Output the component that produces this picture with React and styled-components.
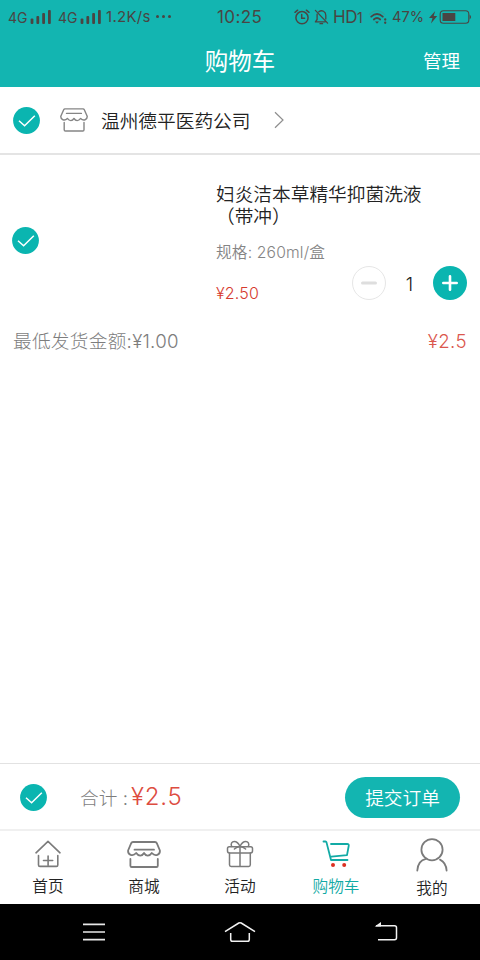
import React, { useState } from "react";
import styled, { createGlobalStyle } from "styled-components";

const tabs = [
	{ key: "home", label: "首页" },
	{ key: "mall", label: "商城" },
	{ key: "gift", label: "活动" },
	{ key: "cart", label: "购物车" },
	{ key: "mine", label: "我的" },
];

const Signal = () => (
	<svg width="22" height="16" viewBox="0 0 22 16" fill="#4a4543">
		<rect x="0.6" y="9.5" width="2.8" height="5.5" rx="1" />
		<rect x="6.4" y="7" width="2.8" height="8" rx="1" />
		<rect x="12.2" y="4" width="2.8" height="11" rx="1" />
		<rect x="18" y="1" width="2.8" height="14" rx="1" />
	</svg>
);

const Alarm = () => (
	<svg width="16" height="16" viewBox="0 0 16 16" fill="none" stroke="#4a4543" strokeWidth="1.5" strokeLinecap="round">
		<circle cx="8" cy="8.7" r="6.1" />
		<path d="M7.7 5.6V9.2H10.6M1 3.3L3.6 1.2M15 3.3L12.4 1.2" />
	</svg>
);

const BellOff = () => (
	<svg width="15" height="16" viewBox="0 0 15 16" fill="none" stroke="#4a4543" strokeWidth="1.3" strokeLinecap="round" strokeLinejoin="round">
		<path d="M4.8 2.8C8 .4 11.8 2.7 11.8 6.3V10M3.1 5.2V10.5L1.4 12.9H11M6 14.7H8.6M1.4 1.4L13.6 14.1" />
	</svg>
);

const Wifi = () => (
	<svg width="20" height="16" viewBox="0 0 20 16" fill="none" stroke="#4a4543" strokeLinecap="round">
		<path d="M1.5 5.2Q9 -2 16.5 5.2" stroke="#2f9f9a" strokeWidth="1.2" />
		<path d="M3.2 7.7Q9 2.4 14.8 7.7M5.8 10.5Q9 7.6 12.2 10.5" strokeWidth="1.8" />
		<path d="M7.1 12.5H10.9L9 14.7Z" fill="#4a4543" stroke="none" />
		<path d="M17.2 10.3V10.5M17.2 13.6V13.8" strokeWidth="2.3" />
	</svg>
);

const Battery = () => (
	<svg width="44" height="16" viewBox="0 0 44 16">
		<path d="M7.2 2L1 9H4.5L3 14.5L9.2 7H5.7Z" fill="#4a4543" />
		<rect x="12.2" y="1.7" width="28.6" height="12.6" rx="3.3" fill="none" stroke="#4a4543" strokeWidth="1.1" />
		<path d="M14.5 4H27.3V12H14.5Z" fill="#4a4543" />
		<path d="M41.6 5.5Q44.5 8 41.6 10.5Z" fill="#4a4543" />
	</svg>
);

const Check = () => (
	<svg width="27" height="27" viewBox="0 0 27 27">
		<circle cx="13.5" cy="13.5" r="13.4" fill="#0ab5b0" />
		<path d="M6 13.7L11.6 18.8L21.8 8.8" fill="none" stroke="#fff" strokeWidth="1.5" />
	</svg>
);

const Shop = () => (
	<svg width="34" height="27" viewBox="0 0 34 27" fill="none" stroke="#7b7b7b" strokeWidth="1.8" strokeLinejoin="round" strokeLinecap="round">
		<path d="M6 1H28Q29.3 1 29.8 2.2L32.9 9.5C33.3 13.5 28.4 16.2 24.8 12C22.6 15.4 18.8 15.4 17 12C15.2 15.4 11.4 15.4 9.2 12C5.6 16.2 .7 13.5 1.1 9.5L4.2 2.2Q4.7 1 6 1Z" />
		<path d="M7.5 8.7H27M3.4 18V24.7Q3.4 26 4.7 26H29.5Q30.8 26 30.8 24.7V18" />
	</svg>
);

const ShopSmall = () => (
	<svg width="28" height="24" viewBox="0 0 28 24" fill="none" stroke="#858585" strokeWidth="1.4" strokeLinejoin="round" strokeLinecap="round">
		<path d="M5 .9H23Q23.9 .9 24.3 1.8L27.2 8.3C27.4 11.6 23.6 13.5 20.6 10.4C18.6 13.3 15.6 13.3 14 10.4C12.4 13.3 9.4 13.3 7.4 10.4C4.4 13.5 .6 11.6 .8 8.3L3.7 1.8Q4.1 .9 5 .9Z" />
		<path d="M6.5 5.4H21.4M4.2 14.5V21.8Q4.2 23 5.4 23H22.8Q24 23 24 21.8V14.5" />
	</svg>
);

const Arrow = () => (
	<svg width="10" height="18" viewBox="0 0 10 18" fill="none" stroke="#8e8e8e" strokeWidth="1.2">
		<path d="M1 1.3L9 9L1 16.7" />
	</svg>
);

const TabIcon = ({ name }) => {
	if (name === "mall") return <Shop />;
	if (name === "home") {
		return (
			<svg width="26" height="28" viewBox="0 0 26 28" fill="none" stroke="#7b7b7b" strokeWidth="1.6" strokeLinecap="round" strokeLinejoin="round">
				<path d="M1 12.8L13 1.3L25 12.8M3.5 15.6V25Q3.5 26.4 4.9 26.4H21.4Q22.8 26.4 22.8 25V15.6M8.5 20.5H17.7M13.1 16V25" />
			</svg>
		);
	}
	if (name === "gift") {
		return (
			<svg width="28" height="28" viewBox="0 0 28 28" fill="none" stroke="#7b7b7b" strokeWidth="1.5" strokeLinecap="round" strokeLinejoin="round">
				<rect x="1.5" y="6.7" width="25" height="6.2" rx="1.8" />
				<path d="M3.5 12.9V24.8Q3.5 26.4 5.1 26.4H22.7Q24.3 26.4 24.3 24.8V12.9M14 6.7V26.4M5.6 6.4C4.4 3.5 6 1.5 8.2 1.5C11 1.5 12.8 3.8 14 6.5C15.2 3.8 17 1.5 19.8 1.5C22 1.5 23.6 3.5 22.4 6.4M14 6.5Q10.8 6.8 8.4 9M14 6.5Q17.2 6.8 19.6 9" />
			</svg>
		);
	}
	if (name === "cart") {
		return (
			<svg width="28" height="28" viewBox="0 0 28 28" fill="none" stroke="#12aaa5" strokeWidth="1.8" strokeLinecap="round" strokeLinejoin="round">
				<path d="M1.5 1.5H3.5Q4.2 1.5 4.5 2.4L9 20H25.5M9 4H25.2Q27.2 4 26.7 6L25 15.2L9.3 16.6" />
				<circle cx="11" cy="25" r="2" fill="#dc3022" stroke="none" />
				<circle cx="22.2" cy="25" r="2" fill="#dc3022" stroke="none" />
			</svg>
		);
	}
	return (
		<svg width="32" height="34" viewBox="0 0 32 34" fill="none" stroke="#7b7b7b" strokeWidth="1.8" strokeLinecap="round">
			<circle cx="16" cy="11.7" r="10.6" />
			<path d="M1.3 32.5C1.7 26 5 21.8 10 20.8M24 21.6C28 23.6 30.3 27.5 30.6 32.5" />
		</svg>
	);
};

const App = () => {
	const [count, setCount] = useState(1);

	return (
		<Page>
			<GlobalStyle />
			<StatusBar>
				<Network>4G</Network>
				<Signal />
				<Network $left={5}>4G</Network>
				<Signal />
				<Speed>1.2K/s</Speed>
				<Dots>
					<i />
					<i />
					<i />
				</Dots>
				<Clock>10:25</Clock>
				<StatusRight>
					<Alarm />
					<BellOff />
					<Hd>
						HD<small>1</small>
					</Hd>
					<Wifi />
					<Percent>47%</Percent>
					<Battery />
				</StatusRight>
			</StatusBar>
			<TitleBar>
				<span />
				<Title>购物车</Title>
				<Manage>管理</Manage>
			</TitleBar>

			<ShopRow>
				<Check />
				<ShopIcon>
					<ShopSmall />
				</ShopIcon>
				<ShopName>温州德平医药公司</ShopName>
				<Arrow />
			</ShopRow>

			<Item>
				<Check />
				<Info>
					<Name>
						妇炎洁本草精华抑菌洗液
						<br />
						（带冲）
					</Name>
					<Spec>规格: 260ml/盒</Spec>
					<PriceRow>
						<Price>¥2.50</Price>
						<Stepper>
							<Round onClick={() => setCount(Math.max(1, count - 1))}>
								<svg width="16" height="16" viewBox="0 0 16 16" stroke="#dedede" strokeWidth="3" strokeLinecap="round">
									<path d="M1.5 8H14.5" />
								</svg>
							</Round>
							<Count>{count}</Count>
							<Round $fill onClick={() => setCount(count + 1)}>
								<svg width="16" height="16" viewBox="0 0 16 16" stroke="#fff" strokeWidth="2.6" strokeLinecap="round">
									<path d="M1.3 8H14.7M8 1.3V14.7" />
								</svg>
							</Round>
						</Stepper>
					</PriceRow>
				</Info>
			</Item>
			<Subtotal>
				<span>最低发货金额:¥1.00</span>
				<b>¥2.5</b>
			</Subtotal>

			<Footer>
				<Check />
				<TotalLabel>合计 :</TotalLabel>
				<Total>¥2.5</Total>
				<Submit>提交订单</Submit>
			</Footer>
			<TabBar>
				{tabs.map((item) => (
					<Tab key={item.key} $active={item.key === "cart"} $low={item.key === "mine"}>
						<IconBox>
							<TabIcon name={item.key} />
						</IconBox>
						{item.label}
					</Tab>
				))}
			</TabBar>
			<SystemNav>
				<svg width="24" height="20" viewBox="0 0 24 20" stroke="#e8e8e8" strokeWidth="1.7">
					<path d="M1 2.3H23M1 10H23M1 17.7H23" />
				</svg>
				<svg width="32" height="22" viewBox="0 0 32 22" fill="none" stroke="#f2f2f2" strokeWidth="1.5" strokeLinejoin="round">
					<path d="M1 10.7L14.8 2Q16 1.3 17.2 2L31 10.7M6.7 12V18.5Q6.7 20.3 8.5 20.3H23.5Q25.3 20.3 25.3 18.5V12" />
				</svg>
				<svg width="24" height="20" viewBox="0 0 24 20" fill="none" stroke="#f2f2f2" strokeWidth="1.5">
					<path d="M2 3.7H20.5Q22.5 3.7 22.5 5.7V15.7Q22.5 17.7 20.5 17.7H4" />
					<path d="M.7 4.4L7 0V4.4Z" fill="#f2f2f2" stroke="none" />
				</svg>
			</SystemNav>
		</Page>
	);
};

const GlobalStyle = createGlobalStyle`
	* {
		box-sizing: border-box;
	}
	body {
		margin: 0;
		background: #fff;
	}
	svg {
		display: block;
		flex: none;
	}
	button {
		font-family: inherit;
		padding: 0;
		border: 0;
	}
`;

const Page = styled.div`
	display: flex;
	flex-direction: column;
	width: 480px;
	height: 960px;
	overflow: hidden;
	background: #fff;
	color: #222;
	font-family: Inter, "Noto Sans CJK SC", sans-serif;
	font-weight: 350;
	white-space: nowrap;
`;

const StatusBar = styled.div`
	display: flex;
	align-items: center;
	height: 33px;
	flex: none;
	padding: 0 8px;
	background: #13b5b1;
	color: #4a4543;
	font-weight: 400;
`;

const Network = styled.span`
	width: 22px;
	margin-left: ${({ $left }) => $left || 0}px;
	padding-top: 2px;
	font-size: 14px;
	letter-spacing: -0.1px;
	& + svg {
		margin-right: 1px;
	}
`;

const Speed = styled.span`
	width: 49px;
	margin-left: 3px;
	font-size: 15px;
	letter-spacing: 0.3px;
`;

const Dots = styled.span`
	display: flex;
	gap: 3px;
	margin-left: 1px;
	i {
		width: 3px;
		height: 3px;
		border-radius: 50%;
		background: #4a4543;
	}
`;

const Clock = styled.span`
	margin-left: 46px;
	font-size: 17px;
	letter-spacing: 0.4px;
`;

const StatusRight = styled.div`
	display: flex;
	align-items: center;
	gap: 4px;
	margin-left: auto;
`;

const Hd = styled.span`
	width: 31px;
	font-size: 17px;
	letter-spacing: -0.4px;
	small {
		font-size: 14px;
	}
`;

const Percent = styled.span`
	width: 32px;
	font-size: 14.6px;
`;

const TitleBar = styled.header`
	display: grid;
	grid-template-columns: 1fr auto 1fr;
	align-items: center;
	height: 54px;
	flex: none;
	padding: 0 20px;
	background: #13b5b1;
	color: #fff;
`;

const Title = styled.h1`
	margin: 0;
	font-size: 23.5px;
	font-weight: 400;
`;

const Manage = styled.span`
	justify-self: end;
	font-size: 18.5px;
	font-weight: 400;
`;

const ShopRow = styled.div`
	display: flex;
	align-items: center;
	height: 68px;
	flex: none;
	padding: 0 13px;
	border-bottom: 2px solid #e4e4e4;
`;

const ShopIcon = styled.span`
	margin-left: 20px;
`;

const ShopName = styled.span`
	width: 173px;
	margin-left: 13px;
	padding-bottom: 1px;
	font-size: 18.7px;
`;

const Item = styled.div`
	display: flex;
	align-items: center;
	height: 170px;
	flex: none;
	padding: 0 13px 0 12px;
`;

const Info = styled.div`
	flex: 1;
	align-self: stretch;
	margin-left: 177px;
	padding-top: 29px;
`;

const Name = styled.div`
	font-size: 18.7px;
	line-height: 22px;
`;

const Spec = styled.div`
	margin-top: 13px;
	color: #858585;
	font-size: 15.7px;
	line-height: 24px;
	letter-spacing: 0.15px;
`;

const PriceRow = styled.div`
	display: flex;
	justify-content: space-between;
	margin-top: 1px;
`;

const Price = styled.span`
	padding-top: 15px;
	color: #d63a2e;
	font-size: 16px;
	line-height: 24px;
	letter-spacing: 0.2px;
`;

const Stepper = styled.div`
	display: flex;
	align-items: center;
	height: 34px;
`;

const Round = styled.button`
	display: grid;
	place-items: center;
	width: 34px;
	height: 34px;
	border: ${({ $fill }) => ($fill ? 0 : "1px solid #e6e6e6")};
	border-radius: 50%;
	background: ${({ $fill }) => ($fill ? "#0ab5b0" : "#fff")};
`;

const Count = styled.span`
	width: 47px;
	padding-top: 2px;
	text-align: center;
	font-size: 18.7px;
`;

const Subtotal = styled.div`
	display: flex;
	justify-content: space-between;
	padding: 3px 13px 0;
	color: #7d7d7d;
	font-size: 18.7px;
	font-weight: 300;
	line-height: 28px;
	letter-spacing: 0.25px;
	b {
		color: #db574e;
		font-weight: 300;
		letter-spacing: 0.4px;
	}
`;

const Footer = styled.div`
	display: flex;
	align-items: center;
	height: 66px;
	flex: none;
	margin-top: auto;
	padding: 2px 20px 0;
	border-top: 1px solid #e2e2e2;
`;

const TotalLabel = styled.span`
	margin-left: 33px;
	padding-bottom: 2px;
	color: #7d7d7d;
	font-size: 18.7px;
	font-weight: 300;
`;

const Total = styled.span`
	margin-left: 3px;
	padding-bottom: 2px;
	color: #dd4c40;
	font-size: 24px;
	font-weight: 300;
	letter-spacing: 0.8px;
`;

const Submit = styled.button`
	width: 115px;
	height: 41px;
	margin-left: auto;
	padding-bottom: 2px;
	border-radius: 21px;
	background: #13b5b1;
	color: #fff;
	font-size: 18.7px;
	font-weight: 350;
`;

const TabBar = styled.nav`
	display: grid;
	grid-template-columns: repeat(5, 1fr);
	height: 75px;
	flex: none;
	border-top: 2px solid #f0f0f0;
`;

const Tab = styled.div`
	display: flex;
	flex-direction: column;
	align-items: center;
	padding-top: ${({ $low }) => ($low ? 6 : 5)}px;
	color: ${({ $active }) => ($active ? "#12aaa5" : "#222")};
	font-size: 15.7px;
	line-height: ${({ $low }) => ($low ? 32 : 30)}px;
`;

const IconBox = styled.span`
	display: grid;
	place-items: center;
	height: 36px;
`;

const SystemNav = styled.div`
	display: flex;
	align-items: center;
	justify-content: space-between;
	height: 56px;
	flex: none;
	padding: 0 82px;
	background: #000;
`;

export default App;
